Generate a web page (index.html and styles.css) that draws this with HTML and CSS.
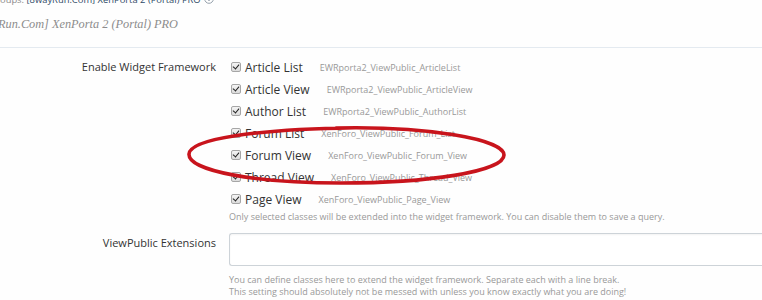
FILE: index.html
```html
<!DOCTYPE html>
<html>
<head>
<meta charset="utf-8">
<link rel="stylesheet" href="styles.css">
</head>
<body>
<div class="page">
  <div class="head">
    <div class="crumb"><span class="crumb-label">oups:</span> <span class="crumb-link">[8wayRun.Com] XenPorta 2 (Portal) PRO</span><span class="crumb-icon"><svg width="10" height="10" viewBox="0 0 10 10"><circle cx="5" cy="5" r="4.3" fill="#fff" stroke="#8a96a3" stroke-width="0.9"/><path d="M3 4 L5 6.2 L7 4" fill="none" stroke="#5b6b7b" stroke-width="1.1"/></svg></span></div>
    <div class="title">Run.Com] XenPorta 2 (Portal) PRO</div>
  </div>

  <div class="row row-main">
    <div class="label">Enable Widget Framework</div>
    <div class="field">
      <ul class="checks">
        <li><span class="cb"></span><span class="opt">Article List</span><span class="cls">EWRporta2_ViewPublic_ArticleList</span></li>
        <li><span class="cb"></span><span class="opt">Article View</span><span class="cls">EWRporta2_ViewPublic_ArticleView</span></li>
        <li><span class="cb"></span><span class="opt">Author List</span><span class="cls">EWRporta2_ViewPublic_AuthorList</span></li>
        <li><span class="cb"></span><span class="opt">Forum List</span><span class="cls">XenForo_ViewPublic_Forum_List</span></li>
        <li><span class="cb"></span><span class="opt">Forum View</span><span class="cls">XenForo_ViewPublic_Forum_View</span></li>
        <li><span class="cb"></span><span class="opt">Thread View</span><span class="cls">XenForo_ViewPublic_Thread_View</span></li>
        <li><span class="cb"></span><span class="opt">Page View</span><span class="cls">XenForo_ViewPublic_Page_View</span></li>
      </ul>
      <p class="hint">Only selected classes will be extended into the widget framework. You can disable them to save a query.</p>
    </div>
  </div>

  <div class="row row-ext">
    <div class="label label-ext">ViewPublic Extensions</div>
    <div class="field">
      <div class="textarea"></div>
      <p class="hint hint-ext">You can define classes here to extend the widget framework. Separate each with a line break.<br>This setting should absolutely not be messed with unless you know exactly what you are doing!</p>
    </div>
  </div>

  <svg class="ring" width="322" height="62" viewBox="0 0 322 62">
    <path d="M150 3 C 240 1, 318 14, 318 30 C 318 47, 240 58, 155 58 C 70 58, 2 46, 3 29 C 4 14, 70 4, 168 3" fill="none" stroke="#c8141c" stroke-width="3.6" stroke-linecap="round"/>
  </svg>
</div>
</body>
</html>
```

FILE: styles.css
```css
html, body {
  margin: 0;
  padding: 0;
  background: #fefefe;
}
.page {
  position: relative;
  width: 762px;
  height: 300px;
  overflow: hidden;
  font-family: "Open Sans", "Noto Sans", sans-serif;
  color: #333;
}
.head {
  display: flow-root;
  box-sizing: border-box;
  height: 48px;
  border-bottom: 1px solid #e4eaf0;
}
.crumb {
  margin-top: -6px;
  font-size: 9.4px;
  line-height: 12px;
  white-space: nowrap;
}
.crumb-label {
  color: #8a8a8a;
}
.crumb-link {
  color: #2f4a66;
}
.crumb-icon {
  display: inline-block;
  vertical-align: -1px;
  margin-left: 3px;
}
.title {
  margin-top: 8px;
  margin-left: -2px;
  font-family: "Liberation Serif", "DejaVu Serif", serif;
  font-style: italic;
  font-size: 12.3px;
  line-height: 18px;
  color: #8c8c8c;
}
.row {
  display: grid;
  grid-template-columns: 216px 1fr;
  column-gap: 13px;
}
.row-main {
  padding-top: 8px;
}
.label {
  text-align: right;
  font-size: 11px;
  line-height: 22px;
  color: #333;
  white-space: nowrap;
}
.checks {
  list-style: none;
  margin: 0;
  padding: 0;
}
.checks li {
  display: flex;
  align-items: center;
  height: 22px;
  white-space: nowrap;
}
.cb {
  position: relative;
  box-sizing: border-box;
  width: 10px;
  height: 10px;
  margin-left: 2px;
  border: 1px solid #a6a6a6;
  border-radius: 2px;
  background: linear-gradient(#f4f4f4, #dcdcdc);
}
.cb::after {
  content: "";
  position: absolute;
  left: 2px;
  top: 0px;
  width: 3px;
  height: 5px;
  border-right: 1.6px solid #222;
  border-bottom: 1.6px solid #222;
  transform: rotate(40deg);
}
.opt {
  margin-left: 4px;
  font-size: 12px;
  color: #333;
}
.cls {
  margin-left: 17px;
  font-size: 9px;
  color: #999;
}
.hint {
  margin: 0;
  font-size: 9px;
  line-height: 14px;
  color: #999;
  white-space: nowrap;
}
.row-ext {
  margin-top: 9px;
}
.label-ext {
  line-height: 19px;
}
.textarea {
  box-sizing: border-box;
  height: 33px;
  width: 600px;
  border: 1px solid #cdd3d8;
  border-right: none;
  border-radius: 3px 0 0 3px;
  background: #fff;
  box-shadow: inset 0 1px 2px rgba(0,0,0,0.05);
}
.hint-ext {
  margin-top: 8px;
  line-height: 12px;
}
.ring {
  position: absolute;
  left: 186px;
  top: 125px;
}
```
